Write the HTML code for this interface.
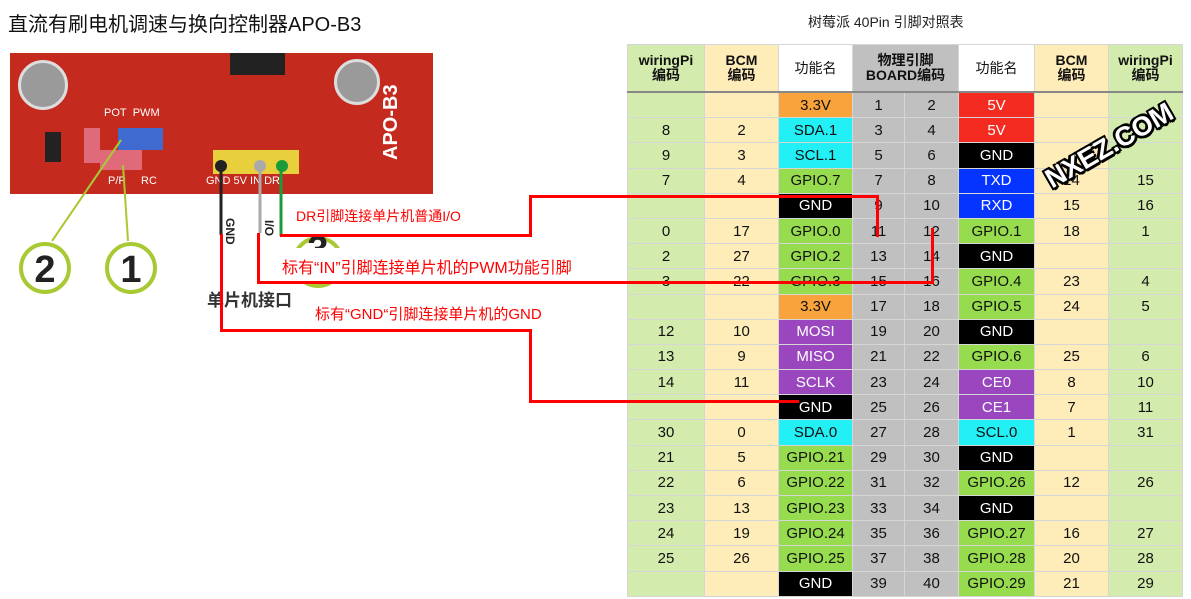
<!DOCTYPE html>
<html><head><meta charset="utf-8"><style>
body{margin:0;width:1191px;height:599px;background:#fff;position:relative;overflow:hidden;font-family:"Liberation Sans","Noto Sans CJK SC",sans-serif}
.a{position:absolute}
table{position:absolute;left:627px;top:44px;border-collapse:collapse;table-layout:fixed;font-family:"Liberation Sans","Noto Sans CJK SC",sans-serif}
td{border:1px solid #d6d6d6;text-align:center;font-size:15px;height:24.2px;padding:0;color:#111}
tr.h td{height:46px;font-weight:bold;font-size:14px;line-height:15px;border-bottom:2px solid #888}
.w{background:#d3ecae}.b{background:#feedb8}.g{background:#c0c0c0}.f{background:#fff}
.o{background:#f8a33c}.r{background:#f42b20;color:#fff}.c{background:#22f0f4}.gr{background:#97dc4e}.k{background:#000;color:#fff}.bl{background:#0533ff;color:#fff}.p{background:#9a47bf;color:#fff}
.ln{position:absolute;background:#f00}
</style></head><body>
<div class="a" style="left:8px;top:8px;font-size:20px;color:#111">直流有刷电机调速与换向控制器APO-B3</div>
<div class="a" style="left:808px;top:12px;font-size:14px;color:#222">树莓派 40Pin 引脚对照表</div>

<!-- PCB -->
<div class="a" style="left:10px;top:53px;width:423px;height:141px;background:#c42a1e"></div>
<div class="a" style="left:18px;top:60px;width:44px;height:44px;border-radius:50%;background:#9a9a9a;border:3px solid #ddd"></div>
<div class="a" style="left:334px;top:59px;width:40px;height:40px;border-radius:50%;background:#9a9a9a;border:3px solid #ddd"></div>
<div class="a" style="left:230px;top:53px;width:55px;height:22px;background:#222"></div>
<div class="a" style="left:84px;top:128px;width:16px;height:35px;background:#e06a7a"></div>
<div class="a" style="left:100px;top:150px;width:42px;height:20px;background:#e06a7a"></div>
<div class="a" style="left:118px;top:128px;width:45px;height:22px;background:#3f6bd0"></div>
<div class="a" style="left:45px;top:132px;width:16px;height:30px;background:#222"></div>
<div class="a" style="left:213px;top:150px;width:86px;height:24px;background:#e8cf3c"></div>
<div class="a" style="left:215px;top:160px;width:12px;height:12px;border-radius:50%;background:#222"></div>
<div class="a" style="left:254px;top:160px;width:12px;height:12px;border-radius:50%;background:#aaa"></div>
<div class="a" style="left:276px;top:160px;width:12px;height:12px;border-radius:50%;background:#1a9a3a"></div>
<div class="a" style="left:104px;top:107px;font-size:11px;color:#fff">POT&nbsp;&nbsp;PWM</div>
<div class="a" style="left:108px;top:175px;font-size:11px;color:#fff">P/P&nbsp;&nbsp;&nbsp;&nbsp;&nbsp;RC</div>
<div class="a" style="left:206px;top:175px;font-size:11px;color:#fff">GND 5V IN DR</div>
<div class="a" style="left:380px;top:160px;transform:rotate(-90deg);transform-origin:0 0;font-size:20px;font-weight:bold;color:#fff;white-space:nowrap">APO-B3</div>
<!-- leaders -->
<svg class="a" style="left:0;top:0" width="450" height="330">
<line x1="121" y1="140" x2="52" y2="241" stroke="#a9c934" stroke-width="2"/>
<line x1="123" y1="165" x2="128" y2="241" stroke="#a9c934" stroke-width="2"/>
<circle cx="45" cy="268" r="24" fill="#fff" stroke="#a9c934" stroke-width="4"/>
<circle cx="131" cy="268" r="24" fill="#fff" stroke="#a9c934" stroke-width="4"/>
<circle cx="318" cy="262" r="24" fill="#fff" stroke="#a9c934" stroke-width="4"/>
<text x="318" y="262" font-size="38" font-weight="bold" text-anchor="middle" fill="#222" font-family="Liberation Sans">3</text>
<text x="45" y="282" font-size="38" font-weight="bold" text-anchor="middle" fill="#222" font-family="Liberation Sans">2</text>
<text x="131" y="282" font-size="38" font-weight="bold" text-anchor="middle" fill="#222" font-family="Liberation Sans">1</text>
<line x1="221" y1="166" x2="221" y2="235" stroke="#222" stroke-width="3"/>
<line x1="260" y1="166" x2="260" y2="233" stroke="#aaa" stroke-width="3"/>
<line x1="281" y1="166" x2="281" y2="236" stroke="#1a9a3a" stroke-width="3"/>
</svg>
<div class="a" style="left:295px;top:197px;width:240px;height:36px;background:#fff"></div>
<div class="a" style="left:237px;top:218px;transform:rotate(90deg);transform-origin:0 0;font-size:12px;font-weight:bold;color:#222">GND</div>
<div class="a" style="left:276px;top:220px;transform:rotate(90deg);transform-origin:0 0;font-size:12px;font-weight:bold;color:#222">I/O</div>
<div class="a" style="left:207px;top:286px;font-size:17px;font-weight:bold;color:#333">单片机接口</div>

<table>
<colgroup><col style="width:77px"><col style="width:74px"><col style="width:74px"><col style="width:52px"><col style="width:54px"><col style="width:76px"><col style="width:74px"><col style="width:74px"></colgroup>
<tr class="h"><td class="w">wiringPi<br>编码</td><td class="b">BCM<br>编码</td><td class="f" style="font-weight:normal">功能名</td><td class="g" colspan="2">物理引脚<br>BOARD编码</td><td class="f" style="font-weight:normal">功能名</td><td class="b">BCM<br>编码</td><td class="w">wiringPi<br>编码</td></tr>
<tr><td class="w"></td><td class="b"></td><td class="o">3.3V</td><td class="g">1</td><td class="g">2</td><td class="r">5V</td><td class="b"></td><td class="w"></td></tr>
<tr><td class="w">8</td><td class="b">2</td><td class="c">SDA.1</td><td class="g">3</td><td class="g">4</td><td class="r">5V</td><td class="b"></td><td class="w"></td></tr>
<tr><td class="w">9</td><td class="b">3</td><td class="c">SCL.1</td><td class="g">5</td><td class="g">6</td><td class="k">GND</td><td class="b"></td><td class="w"></td></tr>
<tr><td class="w">7</td><td class="b">4</td><td class="gr">GPIO.7</td><td class="g">7</td><td class="g">8</td><td class="bl">TXD</td><td class="b">14</td><td class="w">15</td></tr>
<tr><td class="w"></td><td class="b"></td><td class="k">GND</td><td class="g">9</td><td class="g">10</td><td class="bl">RXD</td><td class="b">15</td><td class="w">16</td></tr>
<tr><td class="w">0</td><td class="b">17</td><td class="gr">GPIO.0</td><td class="g">11</td><td class="g">12</td><td class="gr">GPIO.1</td><td class="b">18</td><td class="w">1</td></tr>
<tr><td class="w">2</td><td class="b">27</td><td class="gr">GPIO.2</td><td class="g">13</td><td class="g">14</td><td class="k">GND</td><td class="b"></td><td class="w"></td></tr>
<tr><td class="w">3</td><td class="b">22</td><td class="gr">GPIO.3</td><td class="g">15</td><td class="g">16</td><td class="gr">GPIO.4</td><td class="b">23</td><td class="w">4</td></tr>
<tr><td class="w"></td><td class="b"></td><td class="o">3.3V</td><td class="g">17</td><td class="g">18</td><td class="gr">GPIO.5</td><td class="b">24</td><td class="w">5</td></tr>
<tr><td class="w">12</td><td class="b">10</td><td class="p">MOSI</td><td class="g">19</td><td class="g">20</td><td class="k">GND</td><td class="b"></td><td class="w"></td></tr>
<tr><td class="w">13</td><td class="b">9</td><td class="p">MISO</td><td class="g">21</td><td class="g">22</td><td class="gr">GPIO.6</td><td class="b">25</td><td class="w">6</td></tr>
<tr><td class="w">14</td><td class="b">11</td><td class="p">SCLK</td><td class="g">23</td><td class="g">24</td><td class="p">CE0</td><td class="b">8</td><td class="w">10</td></tr>
<tr><td class="w"></td><td class="b"></td><td class="k">GND</td><td class="g">25</td><td class="g">26</td><td class="p">CE1</td><td class="b">7</td><td class="w">11</td></tr>
<tr><td class="w">30</td><td class="b">0</td><td class="c">SDA.0</td><td class="g">27</td><td class="g">28</td><td class="c">SCL.0</td><td class="b">1</td><td class="w">31</td></tr>
<tr><td class="w">21</td><td class="b">5</td><td class="gr">GPIO.21</td><td class="g">29</td><td class="g">30</td><td class="k">GND</td><td class="b"></td><td class="w"></td></tr>
<tr><td class="w">22</td><td class="b">6</td><td class="gr">GPIO.22</td><td class="g">31</td><td class="g">32</td><td class="gr">GPIO.26</td><td class="b">12</td><td class="w">26</td></tr>
<tr><td class="w">23</td><td class="b">13</td><td class="gr">GPIO.23</td><td class="g">33</td><td class="g">34</td><td class="k">GND</td><td class="b"></td><td class="w"></td></tr>
<tr><td class="w">24</td><td class="b">19</td><td class="gr">GPIO.24</td><td class="g">35</td><td class="g">36</td><td class="gr">GPIO.27</td><td class="b">16</td><td class="w">27</td></tr>
<tr><td class="w">25</td><td class="b">26</td><td class="gr">GPIO.25</td><td class="g">37</td><td class="g">38</td><td class="gr">GPIO.28</td><td class="b">20</td><td class="w">28</td></tr>
<tr><td class="w"></td><td class="b"></td><td class="k">GND</td><td class="g">39</td><td class="g">40</td><td class="gr">GPIO.29</td><td class="b">21</td><td class="w">29</td></tr>
</table>
<div class="a" style="left:1040px;top:168px;transform:rotate(-30deg);transform-origin:0 0;font-size:27px;font-weight:bold;color:#fff;font-family:'Liberation Sans',sans-serif;text-shadow:-2px -2px 0 #000,2px -2px 0 #000,-2px 2px 0 #000,2px 2px 0 #000,0 3px 0 #000;white-space:nowrap">NXEZ.COM</div>

<!-- white label box for IN -->
<div class="a" style="left:270px;top:248px;width:357px;height:33px;background:#fff"></div>
<!-- red lines -->
<div class="ln" style="left:280px;top:234px;width:252px;height:3px"></div>
<div class="ln" style="left:529px;top:195px;width:3px;height:42px"></div>
<div class="ln" style="left:529px;top:195px;width:350px;height:3px"></div>
<div class="ln" style="left:876px;top:195px;width:3px;height:42px"></div>
<div class="ln" style="left:257px;top:233px;width:3px;height:51px"></div>
<div class="ln" style="left:257px;top:281px;width:677px;height:3px"></div>
<div class="ln" style="left:931px;top:228px;width:3px;height:56px"></div>
<div class="ln" style="left:220px;top:234px;width:3px;height:97px"></div>
<div class="ln" style="left:220px;top:329px;width:312px;height:3px"></div>
<div class="ln" style="left:529px;top:329px;width:3px;height:73px"></div>
<div class="ln" style="left:529px;top:400px;width:270px;height:3px"></div>
<div class="a" style="left:296px;top:206px;font-size:14px;color:#f00">DR引脚连接单片机普通I/O</div>
<div class="a" style="left:282px;top:254px;font-size:16px;color:#f00">标有“IN”引脚连接单片机的PWM功能引脚</div>
<div class="a" style="left:315px;top:303px;font-size:15px;color:#f00">标有“GND“引脚连接单片机的GND</div>
</body></html>
